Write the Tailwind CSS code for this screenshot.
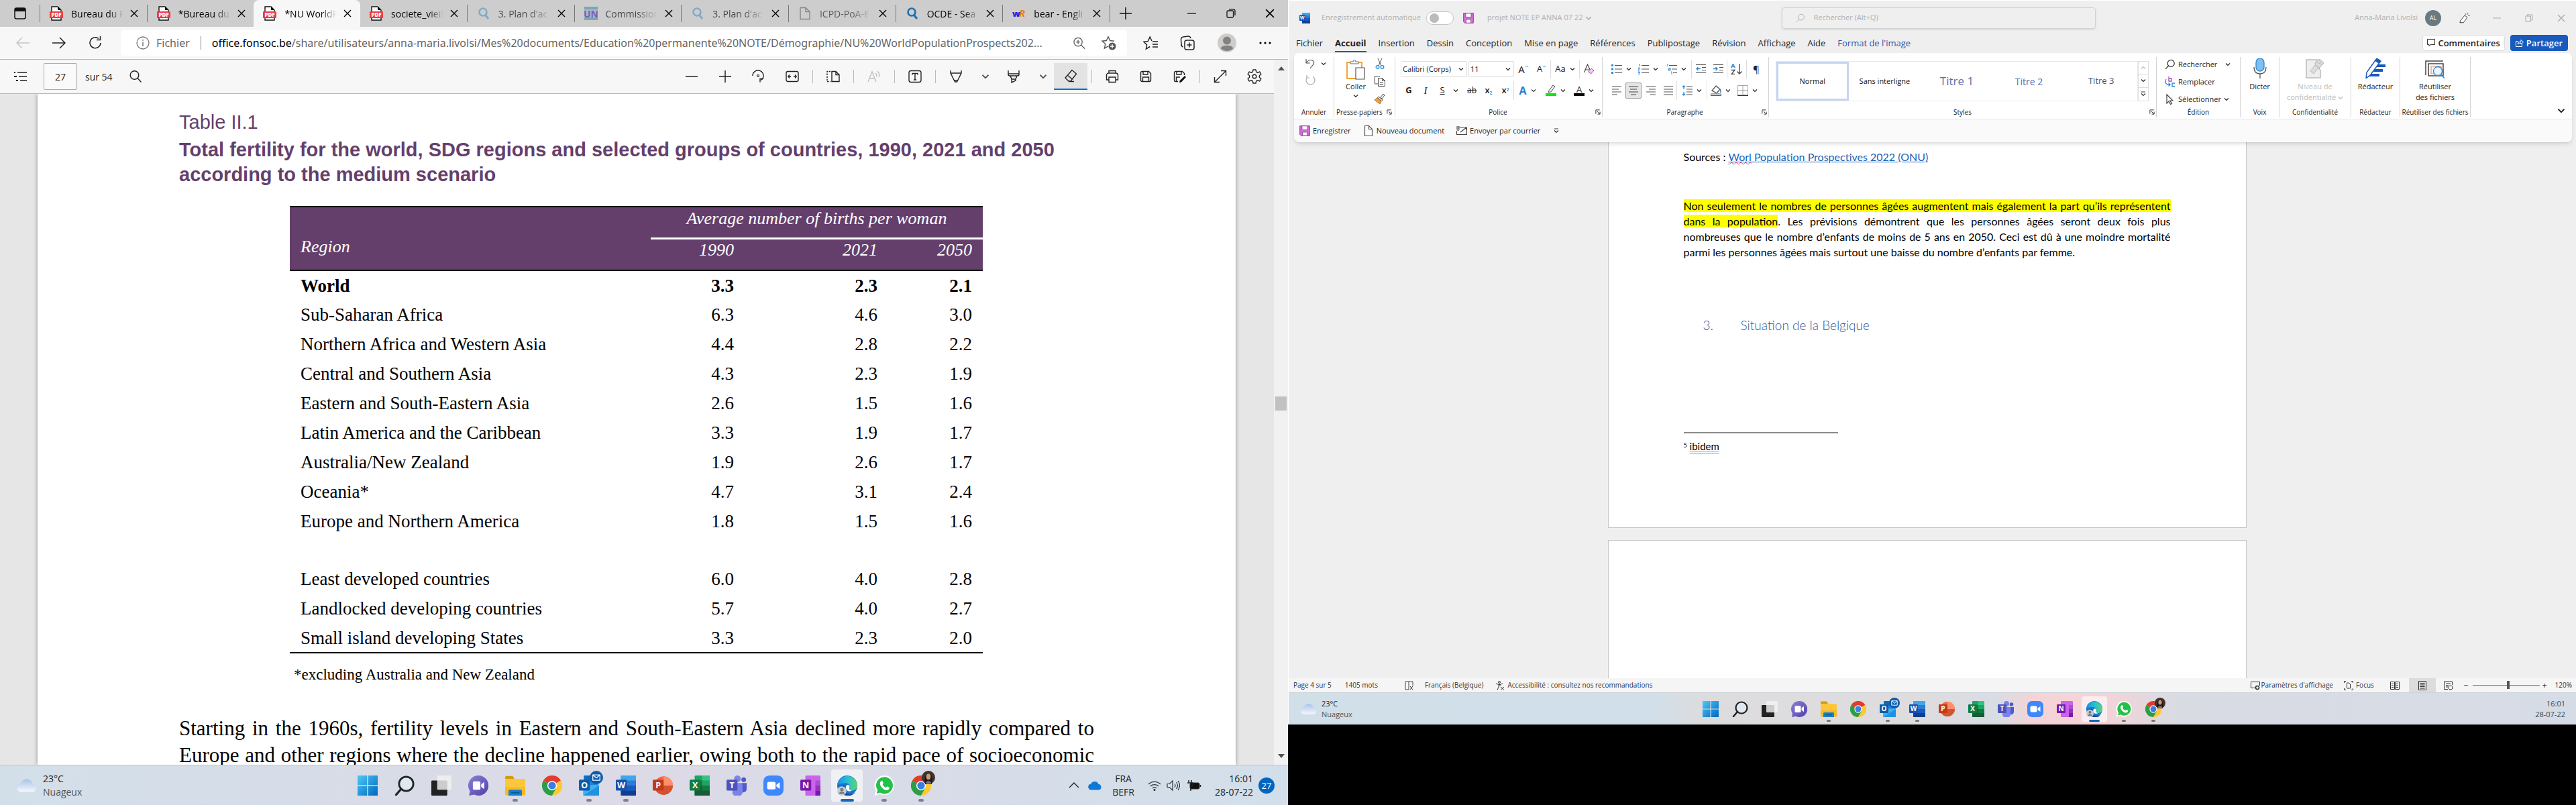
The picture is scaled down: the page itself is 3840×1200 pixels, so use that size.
<!DOCTYPE html>
<html lang="fr">
<head>
    <meta charset="utf-8">
    <title>NU WorldPopulationProspects2022</title>
    <script src="https://cdn.jsdelivr.net/npm/@tailwindcss/browser@4"></script>
</head>
<body class="flex h-screen overflow-hidden bg-black font-['Open_Sans',sans-serif] text-[#222]">

<!-- shared icons -->
<svg class="absolute size-0">
    <defs>
        <linearGradient id="g-win" x1="0" y1="0" x2="1" y2="1"><stop offset="0" stop-color="#4cc8f8"/><stop offset="1" stop-color="#0067c0"/></linearGradient>
        <linearGradient id="g-chat" x1="0" y1="0" x2="1" y2="1"><stop offset="0" stop-color="#8b80d6"/><stop offset="1" stop-color="#5340a8"/></linearGradient>
        <linearGradient id="g-edge" x1="0" y1="0" x2="1" y2="0"><stop offset="0" stop-color="#1b8fe0"/><stop offset=".5" stop-color="#27bfd6"/><stop offset="1" stop-color="#5fd46a"/></linearGradient>
        <linearGradient id="g-cloud" x1="0" y1="0" x2="0" y2="1"><stop offset="0" stop-color="#a9c4e8"/><stop offset="1" stop-color="#f4f8fd"/></linearGradient>
    </defs>
    <symbol id="chev" viewBox="0 0 8 8"><path d="M1 2.5l3 3 3-3" fill="none" stroke="currentColor" stroke-width="1.2"/></symbol>
    <symbol id="close" viewBox="0 0 12 12"><path d="M1 1l10 10M11 1L1 11" fill="none" stroke="currentColor" stroke-width="1.4"/></symbol>
    <symbol id="pdf" viewBox="0 0 20 22">
        <path d="M3 1h9l5 5v15H3z" fill="#fff" stroke="#111" stroke-width="1.4"/><path d="M12 1v5h5z" fill="#111"/>
        <rect x="0" y="8" width="20" height="10" rx="1" fill="#f0393f"/>
        <text x="10" y="16" text-anchor="middle" font-family="Open Sans" font-size="8" font-weight="800" fill="#fff">PDF</text>
    </symbol>
    <symbol id="lens" viewBox="0 0 20 20"><circle cx="9" cy="8" r="5.5" fill="none" stroke="currentColor" stroke-width="2.6"/><path d="M12.5 12.5L17 18" stroke="currentColor" stroke-width="3"/></symbol>
    <symbol id="find" viewBox="0 0 20 20"><circle cx="8.500" cy="8" r="6.300" fill="none" stroke="currentColor" stroke-width="1.4"/><path d="M13 12.500L18.500 18.500" stroke="currentColor" stroke-width="1.4"/></symbol>
    <symbol id="launcher" viewBox="0 0 9 9"><path d="M1 7.500V1h6.500M3.500 3.500L8 8M8 4v4H4" fill="none" stroke="#333" stroke-width="1.100"/></symbol>
    <symbol id="floppy" viewBox="0 0 16 16"><path d="M.7.700h14.600v14.600H2.700L.7 13.300z" fill="#d46ed8" stroke="#8f3a97"/><path d="M4 .8h8v5.700H4z" fill="#fff" stroke="#8f3a97" stroke-width=".8"/><path d="M4.500 10h7v5.200h-7z" fill="#fff" stroke="#8f3a97" stroke-width=".8"/></symbol>
    <symbol id="disk" viewBox="0 0 20 20"><path d="M2.500 4.500a2 2 0 012-2h10l3 3v10a2 2 0 01-2 2h-11a2 2 0 01-2-2zM6 2.500V7h7V2.500M5.500 17.500V11h9v6.500" fill="none" stroke="currentColor" stroke-width="1.400"/></symbol>

    <symbol id="t-start" viewBox="0 0 24 24"><path d="M0 0h11.400v11.400H0zM12.600 0H24v11.400H12.600zM0 12.600h11.400V24H0zM12.600 12.600H24V24H12.600z" fill="url(#g-win)"/></symbol>
    <symbol id="t-find" viewBox="0 0 24 24"><circle cx="14" cy="10" r="8.500" fill="#dfe9f0" stroke="#222" stroke-width="2.200"/><path d="M8 16l-6 7" stroke="#222" stroke-width="2.600" stroke-linecap="round"/></symbol>
    <symbol id="t-desk" viewBox="0 0 24 24"><rect x="0" y="6" width="19" height="18" rx="1" fill="#222"/><rect x="7" y="0" width="17" height="17" rx="1" fill="#f2f2f2" fill-opacity=".82"/></symbol>
    <symbol id="t-chat" viewBox="0 0 24 24"><path d="M12 0a12 12 0 11-5 22.800L1 24l1-5.500A12 12 0 0112 0z" fill="url(#g-chat)"/><rect x="5.500" y="7" width="9" height="10" rx="1.500" fill="#fff"/><path d="M15.500 10.500l3.500-2.700v8.400l-3.500-2.700z" fill="#fff"/></symbol>
    <symbol id="t-folder" viewBox="0 0 24 24"><path d="M0 2a1.500 1.500 0 011.500-1.500H9L11 4H0z" fill="#d49a10"/><path d="M0 4h22.500a1.500 1.500 0 011.500 1.500V22a1.500 1.500 0 01-1.500 1.500h-21A1.500 1.500 0 010 22z" fill="#fcc73a"/><path d="M0 14h24v8a1.500 1.500 0 01-1.500 1.500h-21A1.500 1.500 0 010 22z" fill="#f7b927"/><path d="M4 24v-5.500A1.500 1.500 0 015.500 17h13a1.500 1.500 0 011.500 1.500V24z" fill="#1580cf"/><path d="M7 20.500h10" stroke="#0b5597" stroke-width="1.400"/></symbol>
    <symbol id="t-chrome" viewBox="0 0 24 24"><circle cx="12" cy="12" r="12" fill="#fcc934"/><path d="M12 12L1.600 6A12 12 0 0122.400 6z" fill="#e33b2e"/><path d="M12 12L1.600 6A12 12 0 0012 24l5.200-9z" fill="#2b9d4a"/><path d="M12 12l10.400-6A12 12 0 0112 24l5.200-9z" fill="#fcc934"/><circle cx="12" cy="12" r="5.700" fill="#fff"/><circle cx="12" cy="12" r="4.500" fill="#3b7de8"/></symbol>
    <symbol id="t-outlook" viewBox="0 0 24 24"><path d="M6 0h17v14H6z" fill="#1e86d8"/><path d="M6 0h9v7H6z" fill="#0f6cbd"/><path d="M5 12l19-1v11.500a1.500 1.500 0 01-1.500 1.500h-16A1.500 1.500 0 015 22.500z" fill="#3fb0f0"/><path d="M5 24l19-12v11a1 1 0 01-1 1z" fill="#1f92e0"/><rect x="0" y="5" width="13" height="13" rx="1.200" fill="#0f5ba8"/><text x="6.500" y="15.200" text-anchor="middle" font-family="Open Sans" font-size="10" font-weight="700" fill="#fff">O</text></symbol>
    <symbol id="t-word" viewBox="0 0 24 24"><rect x="6" y="0" width="18" height="24" rx="1.200" fill="#2b7cd3"/><path d="M6 0h18v6H6z" fill="#41a5ee"/><path d="M6 12h18v6H6z" fill="#185abd"/><path d="M6 18h18v5a1 1 0 01-1 1H7a1 1 0 01-1-1z" fill="#103f91"/><rect x="0" y="5" width="13" height="13" rx="1.200" fill="#1451b0"/><text x="6.500" y="15" text-anchor="middle" font-family="Open Sans" font-size="10" font-weight="700" fill="#fff">W</text></symbol>
    <symbol id="t-ppt" viewBox="0 0 24 24"><circle cx="13" cy="12" r="11" fill="#ed6c47"/><path d="M13 1a11 11 0 0111 11H13z" fill="#ff8f6b"/><path d="M2 12h22a11 11 0 01-22 0z" fill="#d35230"/><rect x="0" y="5" width="13" height="13" rx="1.200" fill="#c03a1c"/><text x="6.500" y="15" text-anchor="middle" font-family="Open Sans" font-size="10" font-weight="700" fill="#fff">P</text></symbol>
    <symbol id="t-excel" viewBox="0 0 24 24"><rect x="6" y="0" width="18" height="24" rx="1.200" fill="#21a366"/><path d="M15 0h9v6h-9z" fill="#33c481"/><path d="M6 6h9v6H6z" fill="#107c41"/><path d="M6 12h18v12H6z" fill="#185c37"/><path d="M15 12h9v6h-9z" fill="#107c41"/><rect x="0" y="5" width="13" height="13" rx="1.200" fill="#107c41"/><text x="6.500" y="15" text-anchor="middle" font-family="Open Sans" font-size="10" font-weight="700" fill="#fff">X</text></symbol>
    <symbol id="t-teams" viewBox="0 0 24 24"><circle cx="13" cy="4" r="4" fill="#7b83eb"/><circle cx="20.500" cy="5" r="2.800" fill="#5059c9"/><path d="M17 9h7v7a4 4 0 01-5 4z" fill="#5059c9"/><path d="M7 9h12v8a6 6 0 01-12 4z" fill="#7b83eb"/><rect x="0" y="5" width="13" height="13" rx="1.200" fill="#4b53bc"/><text x="6.500" y="15" text-anchor="middle" font-family="Open Sans" font-size="10" font-weight="700" fill="#fff">T</text></symbol>
    <symbol id="t-zoom" viewBox="0 0 24 24"><rect width="24" height="24" rx="7" fill="#3f88fb"/><rect x="4.500" y="7.500" width="10" height="9" rx="2" fill="#fff"/><path d="M15.500 11l4-3v8l-4-3z" fill="#fff"/></symbol>
    <symbol id="t-onenote" viewBox="0 0 24 24"><rect x="6" y="0" width="18" height="24" rx="1.200" fill="#ca64ea"/><path d="M18 6h6v6h-6z" fill="#ae4bd5"/><path d="M18 12h6v6h-6z" fill="#9332bf"/><path d="M18 18h6v6h-6z" fill="#7719aa"/><rect x="0" y="5" width="13" height="13" rx="1.200" fill="#7719aa"/><text x="6.500" y="15" text-anchor="middle" font-family="Open Sans" font-size="10" font-weight="700" fill="#fff">N</text></symbol>
    <symbol id="t-edge" viewBox="0 0 24 24"><circle cx="12" cy="12" r="12" fill="#1577cf"/><path d="M.3 10A12 12 0 0124 12c0 4-3 6-6.500 6-3 0-4-1.300-3.200-2.300 1.700-2.300.7-6.700-4.300-6.700-4 0-7.700 1.600-9.700 1z" fill="url(#g-edge)"/><path d="M9 11c-3 4 0 11 7 11 2.500 0 4.500-.8 6-2a12 12 0 01-13 3.600C3 21 4 13 9 11z" fill="#0c4f9e"/><path d="M11 12c1.500-1.500 3.800-.5 3.800 1.200 0 1-.8 1.800-.5 2.800.4 1.300 1.800 2 3.200 2-2 1.500-5 1-6.500-1-1-1.500-1-3.500 0-5z" fill="#fff"/><circle cx="5.500" cy="18.500" r="5.500" fill="#c9cdd2"/><circle cx="5.500" cy="16.800" r="2" fill="#767a80"/><path d="M2 22a3.600 3.600 0 017 0z" fill="#767a80"/></symbol>
    <symbol id="t-wa" viewBox="0 0 24 24"><path d="M12.300 0a11.700 11.700 0 11-5.500 22L.5 24l1.800-6A11.700 11.700 0 0112.300 0z" fill="#fff"/><path d="M12.300 1.800a10 10 0 11-5.200 18.500L3 21.500l1.200-4A10 10 0 0112.300 1.800z" fill="#25c04a"/><path d="M8.500 6.500c.8-.5 1.500-.3 1.800.5l.7 1.800c.2.600-.8 1.400-.8 1.800 1 2 2.300 3 4 3.700.5 0 1.200-1.400 1.800-1.200l2 1c.7.400-.2 3.400-2.800 3.400C11 17.500 7 12.500 7 9.500c0-1.300.8-2.500 1.500-3z" fill="#fff"/></symbol>
    <symbol id="t-face" viewBox="0 0 16 16"><circle cx="8" cy="8" r="8" fill="#3d342c"/><path d="M4 16c-1-6 0-13 4-13s5 7 4 13z" fill="#1e1814"/><ellipse cx="8" cy="7" rx="2.600" ry="3.600" fill="#c99a7c"/><path d="M4.500 15a3.600 3.600 0 017 0 8 8 0 01-7 0z" fill="#7c6d8e"/></symbol>
    <symbol id="t-mail" viewBox="0 0 16 16"><circle cx="8" cy="8" r="8" fill="#0b5cad"/><path d="M3.800 4.800h8.400v6.400H3.800zM3.800 4.800L8 8.500l4.200-3.700" fill="none" stroke="#fff"/></symbol>
    <symbol id="t-cloud" viewBox="0 0 30 20"><path d="M8 19a6.500 6.500 0 01-1-13A8.500 8.500 0 0123 7.500 6 6 0 0124 19z" fill="url(#g-cloud)"/></symbol>
</svg>

<!-- left screen -->
<section class="flex h-full w-1/2 flex-col bg-[#f7f7f7]">
    <nav class="flex h-10 shrink-0 items-center bg-[#cdcdcd] text-[14px] text-black">
        <button class="flex h-full w-[59px] items-center pl-5" aria-label="Menu onglets">
            <svg class="size-5" viewBox="0 0 20 20"><rect x="2" y="2" width="16" height="16" rx="2.500" fill="none" stroke="#111" stroke-width="1.500"/><path d="M2 4a2 2 0 012-2h12a2 2 0 012 2v3H2z" fill="#111"/></svg>
        </button>
        <ul class="flex h-full min-w-0 flex-1 items-center">
            <li class="flex h-[26px] min-w-0 flex-1 items-center border-l border-[#777] pl-3.5">
                <svg class="h-[22px] w-5 shrink-0"><use href="#pdf"/></svg>
                <a href="#" class="ml-3 w-[78px] overflow-hidden whitespace-nowrap bg-linear-to-r from-black from-70% to-black/0 bg-clip-text text-transparent">Bureau du P</a>
                <button class="ml-2.5" aria-label="Fermer"><svg class="size-3"><use href="#close"/></svg></button>
            </li>
            <li class="flex h-[26px] min-w-0 flex-1 items-center border-l border-[#777] pl-3.5">
                <svg class="h-[22px] w-5 shrink-0"><use href="#pdf"/></svg>
                <a href="#" class="ml-3 w-[78px] overflow-hidden whitespace-nowrap bg-linear-to-r from-black from-70% to-black/0 bg-clip-text text-transparent">*Bureau du</a>
                <button class="ml-2.5" aria-label="Fermer"><svg class="size-3"><use href="#close"/></svg></button>
            </li>
            <li class="flex h-full min-w-0 flex-1 items-center rounded-t-lg bg-[#f7f7f7] pl-3.5">
                <svg class="h-[22px] w-5 shrink-0"><use href="#pdf"/></svg>
                <a href="#" class="ml-3 w-[78px] overflow-hidden whitespace-nowrap bg-linear-to-r from-black from-70% to-black/0 bg-clip-text text-transparent">*NU WorldP</a>
                <button class="ml-2.5" aria-label="Fermer"><svg class="size-3"><use href="#close"/></svg></button>
            </li>
            <li class="flex h-[26px] min-w-0 flex-1 items-center pl-3.5">
                <svg class="h-[22px] w-5 shrink-0"><use href="#pdf"/></svg>
                <a href="#" class="ml-3 w-[78px] overflow-hidden whitespace-nowrap bg-linear-to-r from-black from-70% to-black/0 bg-clip-text text-transparent">societe_vieil</a>
                <button class="ml-2.5" aria-label="Fermer"><svg class="size-3"><use href="#close"/></svg></button>
            </li>
            <li class="flex h-[26px] min-w-0 flex-1 items-center border-l border-[#777] pl-3.5">
                <svg class="size-5 shrink-0 text-[#7fabc9]"><use href="#lens"/></svg>
                <a href="#" class="ml-3 w-[78px] overflow-hidden whitespace-nowrap bg-linear-to-r from-[#444] from-60% to-black/0 bg-clip-text text-transparent">3. Plan d'ac</a>
                <button class="ml-2.5" aria-label="Fermer"><svg class="size-3"><use href="#close"/></svg></button>
            </li>
            <li class="flex h-[26px] min-w-0 flex-1 items-center border-l border-[#777] pl-3.5">
                <svg class="size-5 shrink-0" viewBox="0 0 20 20"><rect width="20" height="20" fill="#aab4cc"/><path d="M0 0h20v4H0zM0 16h20v4H0z" fill="#77aab0"/><text x="10" y="15.500" text-anchor="middle" font-family="Open Sans" font-size="14" font-weight="700" fill="#7560b5">UN</text></svg>
                <a href="#" class="ml-3 w-[78px] overflow-hidden whitespace-nowrap bg-linear-to-r from-[#444] from-60% to-black/0 bg-clip-text text-transparent">Commission</a>
                <button class="ml-2.5" aria-label="Fermer"><svg class="size-3"><use href="#close"/></svg></button>
            </li>
            <li class="flex h-[26px] min-w-0 flex-1 items-center border-l border-[#777] pl-3.5">
                <svg class="size-5 shrink-0 text-[#7fabc9]"><use href="#lens"/></svg>
                <a href="#" class="ml-3 w-[78px] overflow-hidden whitespace-nowrap bg-linear-to-r from-[#444] from-60% to-black/0 bg-clip-text text-transparent">3. Plan d'ac</a>
                <button class="ml-2.5" aria-label="Fermer"><svg class="size-3"><use href="#close"/></svg></button>
            </li>
            <li class="flex h-[26px] min-w-0 flex-1 items-center border-l border-[#777] pl-3.5">
                <svg class="size-5 shrink-0" viewBox="0 0 20 20"><path d="M3 1.500h8l6 6v11H3zM11 1.500v6h6" fill="none" stroke="#888" stroke-width="1.500"/></svg>
                <a href="#" class="ml-3 w-[78px] overflow-hidden whitespace-nowrap bg-linear-to-r from-[#555] from-60% to-black/0 bg-clip-text text-transparent">ICPD-PoA-E</a>
                <button class="ml-2.5" aria-label="Fermer"><svg class="size-3"><use href="#close"/></svg></button>
            </li>
            <li class="flex h-[26px] min-w-0 flex-1 items-center border-l border-[#777] pl-3.5">
                <svg class="size-5 shrink-0 text-[#1570b8]"><use href="#lens"/></svg>
                <a href="#" class="ml-3 w-[78px] overflow-hidden whitespace-nowrap bg-linear-to-r from-black from-70% to-black/0 bg-clip-text text-transparent">OCDE - Sea</a>
                <button class="ml-2.5" aria-label="Fermer"><svg class="size-3"><use href="#close"/></svg></button>
            </li>
            <li class="flex h-[26px] min-w-0 flex-1 items-center border-x border-[#777] pl-3.5">
                <svg class="size-5 shrink-0" viewBox="0 0 20 20"><text x="0" y="15" font-family="Open Sans" font-size="13" font-weight="800" fill="#2222dd">w</text><text x="10" y="15" font-family="Open Sans" font-size="15" font-style="italic" font-weight="700" fill="#e87d1c">R</text></svg>
                <a href="#" class="ml-3 w-[78px] overflow-hidden whitespace-nowrap bg-linear-to-r from-black from-70% to-black/0 bg-clip-text text-transparent">bear - Engli</a>
                <button class="ml-2.5" aria-label="Fermer"><svg class="size-3"><use href="#close"/></svg></button>
            </li>
        </ul>
        <div class="flex w-[265px] items-center justify-between pl-3.5 pr-5">
            <button aria-label="Nouvel onglet"><svg class="size-[18px]" viewBox="0 0 18 18"><path d="M9 0v18M0 9h18" stroke="#111" stroke-width="1.500"/></svg></button>
            <div class="flex gap-11">
                <button aria-label="Réduire"><svg class="size-3.5" viewBox="0 0 14 14"><path d="M0 7h13" stroke="#111" stroke-width="1.300"/></svg></button>
                <button aria-label="Restaurer"><svg class="size-3.5" viewBox="0 0 14 14"><rect x="1" y="3" width="9.500" height="10" rx="1.500" fill="none" stroke="#111" stroke-width="1.300"/><path d="M4 .8h6.500a2.500 2.500 0 012.500 2.500V10" fill="none" stroke="#111" stroke-width="1.300"/></svg></button>
                <button aria-label="Fermer la fenêtre"><svg class="size-3.5"><use href="#close"/></svg></button>
            </div>
        </div>
    </nav>

    <div class="flex h-[49px] shrink-0 items-center border-b border-[#b9b9b9] pl-6 pr-6">
        <div class="flex w-[156px] gap-[34px]">
            <button aria-label="Précédent"><svg class="size-5" viewBox="0 0 20 20"><path d="M20 10H1M9 2L1 10l8 8" fill="none" stroke="#c4c4c4" stroke-width="1.500"/></svg></button>
            <button aria-label="Suivant"><svg class="size-5" viewBox="0 0 20 20"><path d="M0 10h19M11 2l8 8-8 8" fill="none" stroke="#222" stroke-width="1.500"/></svg></button>
            <button aria-label="Actualiser"><svg class="size-5" viewBox="0 0 20 20"><path d="M18 10a8 8 0 11-3-6.500M17.500 0v5.500H12" fill="none" stroke="#222" stroke-width="1.500"/></svg></button>
        </div>
        <div class="flex h-[38px] min-w-0 flex-1 items-center rounded bg-white pl-[23px] pr-4 font-['Noto_Sans',sans-serif] text-[16px] text-[#666]">
            <svg class="size-5 shrink-0" viewBox="0 0 20 20"><circle cx="10" cy="10" r="9" fill="none" stroke="#777" stroke-width="1.300"/><path d="M10 8.500V15M10 5v1.800" stroke="#777" stroke-width="1.500"/></svg>
            <span class="ml-2.5">Fichier</span>
            <span class="mx-4 h-5 w-px bg-[#888]"></span>
            <a href="#" class="min-w-0 flex-1 truncate"><span class="text-black">office.fonsoc.be</span>/share/utilisateurs/anna-maria.livolsi/Mes%20documents/Education%20permanente%20NOTE/Démographie/NU%20WorldPopulationProspects202...</a>
            <button aria-label="Zoom"><svg class="size-[19px]" viewBox="0 0 20 20"><circle cx="8.500" cy="8" r="6.500" fill="none" stroke="#555" stroke-width="1.300"/><path d="M8.500 5v6M5.500 8h6M13 12.500l6 6" stroke="#555" stroke-width="1.400"/></svg></button>
            <button class="ml-6" aria-label="Ajouter aux favoris"><svg class="size-[22px]" viewBox="0 0 22 22"><path d="M10 1.500l2.600 6 6.400.7M10 1.500L7.400 7.500 1 8.200l4.800 4.300L4.400 19l5.600-3.200" fill="none" stroke="#555" stroke-width="1.400"/><circle cx="16" cy="16" r="5.500" fill="#555"/><path d="M16 13v6M13 16h6" stroke="#fff" stroke-width="1.400"/></svg></button>
        </div>
        <div class="flex w-[216px] items-center justify-between pl-6">
            <button aria-label="Favoris"><svg class="size-[22px]" viewBox="0 0 22 22"><path d="M13 8l-2.800-6-3 6.500-6.400.8 4.800 4.500L4.400 20l5.800-3.500M14 9h8M14 13h8M14 17h8" fill="none" stroke="#222" stroke-width="1.500"/></svg></button>
            <button aria-label="Collections"><svg class="size-[22px]" viewBox="0 0 22 22"><rect x="7" y="7" width="14" height="14" rx="3" fill="none" stroke="#222" stroke-width="1.500"/><path d="M14 10.500v7M10.500 14h7M4.500 17A4 4 0 012 13L1.500 6A4 4 0 015 2l7-1a4 4 0 014 3" fill="none" stroke="#222" stroke-width="1.500"/></svg></button>
            <button aria-label="Profil"><svg class="size-7" viewBox="0 0 28 28"><circle cx="14" cy="14" r="14" fill="#cfcdca"/><circle cx="14" cy="10.500" r="6" fill="#85817e"/><path d="M4.500 22a10 6 0 0119 0 13.500 13.500 0 01-19 0z" fill="#85817e"/></svg></button>
            <button aria-label="Paramètres et plus"><svg class="h-4 w-5" viewBox="0 0 20 16"><circle cx="3" cy="8" r="1.600"/><circle cx="10" cy="8" r="1.600"/><circle cx="17" cy="8" r="1.600"/></svg></button>
        </div>
    </div>

    <div class="flex min-h-0 flex-1">
        <div class="flex min-w-0 flex-1 flex-col">
            <div class="flex h-[51px] shrink-0 items-center border-b border-[#b9b9b9] pl-5 pr-[18px] text-[14px]">
                <button aria-label="Sommaire"><svg class="size-5" viewBox="0 0 20 20"><path d="M6 4h14M8 10h12M10 16h10" stroke="#222" stroke-width="1.500"/><path d="M1 4h2M1 10h4M4 16h3" stroke="#222" stroke-width="2"/></svg></button>
                <input class="ml-[25px] h-10 w-[50px] rounded-xs border border-[#aaa] bg-[#fafafa] text-center" value="27" aria-label="Page">
                <span class="ml-3 mr-6">sur 54</span>
                <button aria-label="Rechercher"><svg class="size-5"><use href="#find"/></svg></button>
                <div class="ml-auto flex items-center gap-[30px] text-[#222]">
                    <button aria-label="Zoom arrière"><svg class="size-5" viewBox="0 0 20 20"><path d="M1 10h18" stroke="#222" stroke-width="1.500"/></svg></button>
                    <button aria-label="Zoom avant"><svg class="size-5" viewBox="0 0 20 20"><path d="M1 10h18M10 1v18" stroke="#222" stroke-width="1.500"/></svg></button>
                    <button aria-label="Pivoter"><svg class="size-5" viewBox="0 0 20 20"><path d="M1 9a8 8 0 1112.500 6.500M12 18.500v-5h5" fill="none" stroke="#222" stroke-width="1.400"/><circle cx="9" cy="9" r="1.500" fill="none" stroke="#222" stroke-width="1.200"/></svg></button>
                    <button aria-label="Ajuster"><svg class="size-5" viewBox="0 0 20 20"><rect x="1" y="2.500" width="18" height="15" rx="2.500" fill="none" stroke="#222" stroke-width="1.400"/><path d="M8 10H4M6 7.500L3.800 10 6 12.500M12 10h4M14 7.500l2.200 2.500-2.200 2.500" fill="none" stroke="#222" stroke-width="1.300"/></svg></button>
                </div>
                <div class="ml-5 flex items-center gap-5">
                    <span class="h-5 w-px bg-[#bbb]"></span>
                    <button aria-label="Affichage"><svg class="size-5" viewBox="0 0 20 20"><path d="M8 2.500h6l5 5v10H8zM14 2.500v5h5" fill="none" stroke="#222" stroke-width="1.400"/><path d="M6 2.500H1v15h5" fill="none" stroke="#222" stroke-width="1.400" stroke-dasharray="2.500 1.500"/></svg></button>
                    <span class="h-5 w-px bg-[#bbb]"></span>
                    <button aria-label="Lire à voix haute"><svg class="size-5" viewBox="0 0 20 20"><path d="M1 18L7 3l6 15M3 13h8M12 5q2.500 2 1.500 5M15 2q4 4 2 9" fill="none" stroke="#c0c0c0" stroke-width="1.400"/></svg></button>
                    <span class="h-5 w-px bg-[#bbb]"></span>
                    <button aria-label="Ajouter du texte"><svg class="size-5" viewBox="0 0 20 20"><rect x="1" y="1.500" width="18" height="17" rx="3" fill="none" stroke="#222" stroke-width="1.400"/><path d="M6 7.500V5.500h8v2M10 5.500V15M8 15h4" fill="none" stroke="#222" stroke-width="1.400"/></svg></button>
                    <span class="h-5 w-px bg-[#bbb]"></span>
                </div>
                <div class="ml-5 flex items-center">
                    <button aria-label="Dessiner"><svg class="size-5" viewBox="0 0 20 20"><path d="M2 1v4l6.500 13h3L18 5V1M2 5h16M8 16h4" fill="none" stroke="#222" stroke-width="1.400"/></svg></button>
                    <button class="ml-7" aria-label="Options du stylet"><svg class="size-3 text-[#555]"><use href="#chev"/></svg></button>
                    <button class="ml-[26px]" aria-label="Surligner"><svg class="size-5" viewBox="0 0 20 20"><path d="M2 1v6a2 2 0 002 2h12a2 2 0 002-2V1M2 6h16M5 9l2 5h6l2-5M7 14v5l6-3v-2" fill="none" stroke="#222" stroke-width="1.400"/></svg></button>
                    <button class="ml-7" aria-label="Options du surligneur"><svg class="size-3 text-[#555]"><use href="#chev"/></svg></button>
                    <button class="ml-2.5 flex h-10 w-[50px] items-center justify-center border-b-2 border-[#0f6cbd] bg-[#e3e3e3]" aria-label="Effacer"><svg class="size-5" viewBox="0 0 20 20"><path d="M12 1.500l6.500 5.500-8.500 11H7L2 13zM5 9l7.500 6M7 18.500h8" fill="none" stroke="#222" stroke-width="1.400"/></svg></button>
                    <span class="ml-1.5 h-5 w-px bg-[#bbb]"></span>
                </div>
                <div class="ml-5 flex items-center gap-[30px]">
                    <button aria-label="Imprimer"><svg class="size-5" viewBox="0 0 20 20"><path d="M5 5V1.500h10V5M4.500 15H1.500V8a3 3 0 013-3h11a3 3 0 013 3v7h-3M5 11h10v7.500H5z" fill="none" stroke="#222" stroke-width="1.400"/></svg></button>
                    <button aria-label="Enregistrer"><svg class="size-5"><use href="#disk"/></svg></button>
                    <button aria-label="Enregistrer sous"><svg class="size-5" viewBox="0 0 20 20"><path d="M8 17.500H4.500a2 2 0 01-2-2v-11a2 2 0 012-2h10l3 3V8M6 2.500V7h7V2.500M5.500 17.500V11H11" fill="none" stroke="#222" stroke-width="1.400"/><path d="M18 9l2 2-7 7.500-3 .8.700-3z" fill="#111"/></svg></button>
                </div>
                <div class="ml-5 flex items-center">
                    <span class="h-5 w-px bg-[#bbb]"></span>
                    <button class="ml-5" aria-label="Plein écran"><svg class="size-5" viewBox="0 0 20 20"><path d="M1.500 18.500l17-17M11 1.500h7.500V9M1.500 11v7.500H9" fill="none" stroke="#222" stroke-width="1.400"/></svg></button>
                    <button class="ml-[30px]" aria-label="Paramètres"><svg class="size-[22px]" viewBox="0 0 22 22"><path d="M9 1h4l.7 3.200 2 1.100L18.900 4l2 3.500-2.500 2.300v2.400l2.500 2.300-2 3.500-3.200-1.300-2 1.100L13 21H9l-.7-3.200-2-1.100L3.100 18l-2-3.500 2.500-2.300V9.800L1.100 7.500l2-3.500 3.200 1.300 2-1.100z" fill="none" stroke="#222" stroke-width="1.400" stroke-linejoin="round"/><circle cx="11" cy="11" r="2.800" fill="none" stroke="#222" stroke-width="1.400"/></svg></button>
                </div>
            </div>

            <main class="min-h-0 flex-1 overflow-hidden bg-[#e6e6e6] pl-14 pr-[57px]">
                <article class="h-full bg-white pl-[211px] pr-[211px] pt-6 text-black shadow-[0_0_6px_rgba(0,0,0,0.4)]">
                    <h2 class="font-['Liberation_Sans',sans-serif] text-[29px] leading-[37px] text-[#643f6c]">
                        <span class="mb-1 block">Table II.1</span>
                        <strong class="block">Total fertility for the world, SDG regions and selected groups of countries, 1990, 2021 and 2050<br>according to the medium scenario</strong>
                    </h2>
                    <table class="ml-[165px] mt-7 w-[1033px] border-b-2 border-black font-['Liberation_Serif',serif] text-[27px] leading-7">
                        <thead class="border-y-2 border-black bg-[#643f6c] text-left text-[26px] italic text-white">
                            <tr class="h-[47px]">
                                <th rowspan="2" class="w-[538px] pb-5 pl-4 align-bottom font-normal">Region</th>
                                <th colspan="3" class="border-b-3 border-white pb-2.5 text-center font-normal">Average number of births per woman</th>
                            </tr>
                            <tr class="h-12 text-right">
                                <th class="w-[124px] pb-3 font-normal">1990</th>
                                <th class="w-[214px] pb-3 font-normal">2021</th>
                                <th class="pb-3 pr-4 font-normal">2050</th>
                            </tr>
                        </thead>
                        <tbody class="text-right">
                            <tr class="h-11 font-bold"><th class="pl-4 text-left">World</th><td>3.3</td><td>2.3</td><td class="pr-4">2.1</td></tr>
                            <tr class="h-11"><td class="pl-4 text-left">Sub-Saharan Africa</td><td>6.3</td><td>4.6</td><td class="pr-4">3.0</td></tr>
                            <tr class="h-11"><td class="pl-4 text-left">Northern Africa and Western Asia</td><td>4.4</td><td>2.8</td><td class="pr-4">2.2</td></tr>
                            <tr class="h-11"><td class="pl-4 text-left">Central and Southern Asia</td><td>4.3</td><td>2.3</td><td class="pr-4">1.9</td></tr>
                            <tr class="h-11"><td class="pl-4 text-left">Eastern and South-Eastern Asia</td><td>2.6</td><td>1.5</td><td class="pr-4">1.6</td></tr>
                            <tr class="h-11"><td class="pl-4 text-left">Latin America and the Caribbean</td><td>3.3</td><td>1.9</td><td class="pr-4">1.7</td></tr>
                            <tr class="h-11"><td class="pl-4 text-left">Australia/New Zealand</td><td>1.9</td><td>2.6</td><td class="pr-4">1.7</td></tr>
                            <tr class="h-11"><td class="pl-4 text-left">Oceania*</td><td>4.7</td><td>3.1</td><td class="pr-4">2.4</td></tr>
                            <tr class="h-11"><td class="pl-4 text-left">Europe and Northern America</td><td>1.8</td><td>1.5</td><td class="pr-4">1.6</td></tr>
                            <tr class="h-[42px]"><td colspan="4"></td></tr>
                            <tr class="h-11"><td class="pl-4 text-left">Least developed countries</td><td>6.0</td><td>4.0</td><td class="pr-4">2.8</td></tr>
                            <tr class="h-11"><td class="pl-4 text-left">Landlocked developing countries</td><td>5.7</td><td>4.0</td><td class="pr-4">2.7</td></tr>
                            <tr class="h-11"><td class="pl-4 text-left">Small island developing States</td><td>3.3</td><td>2.3</td><td class="pr-4">2.0</td></tr>
                        </tbody>
                    </table>
                    <p class="ml-[171px] mt-[18px] font-['Liberation_Serif',serif] text-[23px] leading-7">*excluding Australia and New Zealand</p>
                    <p class="mt-[46px] text-justify font-['Liberation_Serif',serif] text-[31px] leading-10 [text-align-last:justify]">Starting in the 1960s, fertility levels in Eastern and South-Eastern Asia declined more rapidly compared to Europe and other regions where the decline happened earlier, owing both to the rapid pace of socioeconomic</p>
                </article>
            </main>
        </div>
        <div class="flex w-[21px] shrink-0 flex-col items-center justify-between bg-[#f1f1f1] py-2">
            <svg class="size-2.5" viewBox="0 0 10 10"><path d="M5 2l5 6H0z" fill="#505050"/></svg>
            <span class="mb-[26px] h-[21px] w-[17px] bg-[#c1c1c1]"></span>
            <svg class="size-2.5" viewBox="0 0 10 10"><path d="M5 8L0 2h10z" fill="#505050"/></svg>
        </div>
    </div>

    <footer class="grid h-[60px] shrink-0 grid-cols-[520px_1fr_auto] items-center border-t border-[#bcc5cc] bg-linear-to-r from-[#d2dfe9] via-[#dcdae6] to-[#d2dfea] text-[14px] leading-5">
        <div class="flex items-center gap-2 pl-6">
            <svg class="h-6 w-8"><use href="#t-cloud"/></svg>
            <div>23°C<br><span class="text-[#555]">Nuageux</span></div>
        </div>
        <ul class="flex items-center">
            <li class="flex h-12 w-[55px] items-center justify-center"><svg class="size-[30px]"><use href="#t-start"/></svg></li>
            <li class="flex h-12 w-[55px] items-center justify-center"><svg class="size-[30px]"><use href="#t-find"/></svg></li>
            <li class="flex h-12 w-[55px] items-center justify-center"><svg class="size-[30px]"><use href="#t-desk"/></svg></li>
            <li class="flex h-12 w-[55px] items-center justify-center"><svg class="size-[30px]"><use href="#t-chat"/></svg></li>
            <li class="relative flex h-12 w-[55px] items-center justify-center"><svg class="size-[30px]"><use href="#t-folder"/></svg><i class="absolute bottom-0 h-1 w-2 rounded-full bg-[#7a8290]"></i></li>
            <li class="flex h-12 w-[55px] items-center justify-center"><svg class="size-[30px]"><use href="#t-chrome"/></svg></li>
            <li class="relative flex h-12 w-[55px] items-center justify-center"><svg class="size-[30px]"><use href="#t-outlook"/></svg><svg class="absolute right-1.5 top-0.5 size-5"><use href="#t-mail"/></svg><i class="absolute bottom-0 h-1 w-2 rounded-full bg-[#7a8290]"></i></li>
            <li class="relative flex h-12 w-[55px] items-center justify-center"><svg class="size-[30px]"><use href="#t-word"/></svg><i class="absolute bottom-0 h-1 w-2 rounded-full bg-[#7a8290]"></i></li>
            <li class="flex h-12 w-[55px] items-center justify-center"><svg class="size-[30px]"><use href="#t-ppt"/></svg></li>
            <li class="flex h-12 w-[55px] items-center justify-center"><svg class="size-[30px]"><use href="#t-excel"/></svg></li>
            <li class="flex h-12 w-[55px] items-center justify-center"><svg class="size-[30px]"><use href="#t-teams"/></svg></li>
            <li class="flex h-12 w-[55px] items-center justify-center"><svg class="size-[30px]"><use href="#t-zoom"/></svg></li>
            <li class="flex h-12 w-[55px] items-center justify-center"><svg class="size-[30px]"><use href="#t-onenote"/></svg></li>
            <li class="relative mx-1 flex h-12 w-[47px] items-center justify-center rounded bg-white/60"><svg class="size-[30px]"><use href="#t-edge"/></svg><i class="absolute bottom-0 h-1 w-5 rounded-full bg-[#0f6cbd]"></i></li>
            <li class="relative flex h-12 w-[55px] items-center justify-center"><svg class="size-[30px]"><use href="#t-wa"/></svg><i class="absolute bottom-0 h-1 w-2 rounded-full bg-[#7a8290]"></i></li>
            <li class="relative flex h-12 w-[55px] items-center justify-center"><svg class="size-[30px]"><use href="#t-chrome"/></svg><svg class="absolute right-1.5 top-0.5 size-5"><use href="#t-face"/></svg><i class="absolute bottom-0 h-1 w-2 rounded-full bg-[#7a8290]"></i></li>
        </ul>
        <div class="flex items-center pr-5">
            <svg class="size-3.5" viewBox="0 0 14 14"><path d="M0 10l7-7 7 7" fill="none" stroke="#222" stroke-width="1.400"/></svg>
            <svg class="ml-3.5 h-4 w-5" viewBox="0 0 20 16"><path d="M5 14.500a4.500 4.500 0 01-.6-9A6 6 0 0115.500 6a4.300 4.300 0 01.5 8.500z" fill="#0f78d4"/></svg>
            <div class="ml-4 text-center">FRA<br>BEFR</div>
            <svg class="ml-5 size-5" viewBox="0 0 20 20"><path d="M1 8a13 13 0 0118 0M4 11a9 9 0 0112 0M7 14a5 5 0 016 0" fill="none" stroke="#333" stroke-width="1.300"/><circle cx="10" cy="16.500" r="1.500" fill="#222"/></svg>
            <svg class="ml-2 size-5" viewBox="0 0 20 20"><path d="M1 7.500h3.500L9 3v14l-4.500-4.500H1zM12 7.500q2 2.500 0 5M14.500 5q4 5 0 10M17 3q5 7 0 14" fill="none" stroke="#333" stroke-width="1.200"/></svg>
            <svg class="ml-2.5 h-5 w-[22px]" viewBox="0 0 22 20"><rect x="5" y="6" width="14" height="9" rx="2" fill="#111" stroke="#333"/><path d="M20.500 9v3M3 2v4M7 2v4M1 6h8v4H6v8" stroke="#222" stroke-width="1.500" fill="none"/></svg>
            <div class="ml-5 text-right">16:01<br>28-07-22</div>
            <span class="ml-2 flex size-6 items-center justify-center rounded-full bg-[#0067c0] text-[13px] text-white">27</span>
        </div>
    </footer>
</section>

<!-- right screen -->
<section class="flex h-[90vh] w-1/2 flex-col border-l border-t border-white bg-[#efefef]">
    <header class="flex h-[51px] shrink-0 items-center pl-4 text-[11px] text-[#b0b0b0]">
        <svg class="size-4"><use href="#t-word"/></svg>
        <label class="ml-[17px] flex items-center gap-2">Enregistrement automatique
            <input type="checkbox" class="sr-only">
            <span class="flex h-5 w-[41px] items-center rounded-full border border-[#c4c4c4] bg-white pl-1"><i class="size-3.5 rounded-full bg-[#bbb]"></i></span>
        </label>
        <button class="ml-3.5" aria-label="Enregistrer"><svg class="size-4"><use href="#floppy"/></svg></button>
        <button class="ml-5 flex items-center gap-1">projet NOTE EP ANNA 07 22 <svg class="size-2.5"><use href="#chev"/></svg></button>
        <div class="ml-[283px] flex h-8 w-[468px] items-center rounded border border-[#d2d2d2] pl-5 shadow-sm">
            <svg class="size-3.5 -scale-x-100"><use href="#find"/></svg>
            <input type="search" class="ml-3 flex-1 placeholder:text-[#b0b0b0]" placeholder="Rechercher (Alt+Q)" aria-label="Rechercher">
        </div>
        <span class="ml-auto">Anna-Maria Livolsi</span>
        <span class="ml-[11px] flex size-6 items-center justify-center rounded-full bg-[#69797e] text-[9px] text-white">AL</span>
        <svg class="ml-[27px] size-4" viewBox="0 0 16 16"><path d="M8 4l4 3-6 8-4-.500-1 .500.500-3z" fill="#fff" stroke="#444"/><path d="M9 1l1 2M13 0l-1 3M16 4l-3 .500" stroke="#2b88d8"/></svg>
        <svg class="ml-[34px] size-3" viewBox="0 0 12 12"><path d="M0 6h12" stroke="#aaa"/></svg>
        <svg class="ml-9 size-3" viewBox="0 0 12 12"><path d="M1 3h7.500v8H1zM3 3V1h8v8H8.500" fill="none" stroke="#aaa"/></svg>
        <svg class="ml-9 mr-4 size-3 text-[#aaa]"><use href="#close"/></svg>
    </header>

    <nav class="flex h-[27px] shrink-0 items-start pl-[11px] pr-3 text-[13px] leading-6">
        <ul class="flex gap-[18px]">
            <li><a href="#">Fichier</a></li>
            <li><a href="#" class="block border-b-2 border-[#2b579a] font-bold">Accueil</a></li>
            <li><a href="#">Insertion</a></li>
            <li><a href="#">Dessin</a></li>
            <li><a href="#">Conception</a></li>
            <li><a href="#">Mise en page</a></li>
            <li><a href="#">Références</a></li>
            <li><a href="#">Publipostage</a></li>
            <li><a href="#">Révision</a></li>
            <li><a href="#">Affichage</a></li>
            <li><a href="#">Aide</a></li>
            <li><a href="#" class="text-[#2b57a8]">Format de l'image</a></li>
        </ul>
        <button class="ml-auto flex h-6 items-center gap-1 rounded border border-[#ddd] bg-white px-1.5 font-semibold"><svg class="size-3" viewBox="0 0 12 12"><path d="M.5.500h11v8H5l-2 2.500v-2.500H.5z" fill="none" stroke="#333"/></svg>Commentaires</button>
        <button class="ml-2 flex h-6 items-center gap-1 rounded bg-[#185abd] px-2 font-semibold text-white"><svg class="size-3" viewBox="0 0 12 12"><path d="M4 3.500H.5v8h9V8M3 8q.5-4 5-4V1.500L11.500 5 8 8V6Q5 6 3 8z" fill="none" stroke="#fff"/></svg>Partager</button>
    </nav>

    <div class="z-10 ml-2 mr-1.5 shrink-0 rounded-lg bg-[#fafafa] shadow-md">
        <div class="flex h-[99px] rounded-t-lg border-b border-[#e4e4e4] bg-white text-[11px]">
            <div class="mb-0.5 mt-1.5 flex w-[60px] flex-col border-r border-[#d4d4d4]">
                <div class="flex items-center gap-2 pl-4 pt-0.5"><svg class="size-4" viewBox="0 0 16 16"><path d="M2 1v6h6M2 7q4-6 9-4t1 7l-4 5" fill="none" stroke="#555" stroke-width="1.200"/></svg><svg class="size-2"><use href="#chev"/></svg></div>
                <svg class="ml-4 mt-2 size-4" viewBox="0 0 16 16"><path d="M3 1v4h4M3 5a6.500 6.500 0 109-2" fill="none" stroke="#aaa" stroke-width="1.200"/></svg>
                <span class="mt-auto text-center text-[10px] leading-4">Annuler</span>
            </div>
            <div class="mb-0.5 mt-1.5 flex w-[91px] flex-col border-r border-[#d4d4d4]">
                <div class="flex flex-1 pl-4">
                    <button class="flex w-8 flex-col items-center"><svg class="mt-1 h-[30px] w-7" viewBox="0 0 28 30"><path d="M1 4h22v24H1z" fill="#fff" stroke="#f0a63c" stroke-width="2"/><path d="M6 6V3h4q1-3 2-3t2 3h4v3z" fill="#fff" stroke="#666"/><path d="M14 12h13v17H14z" fill="#fff" stroke="#555" stroke-width="1.200"/></svg><span class="leading-5">Coller</span><svg class="size-2"><use href="#chev"/></svg></button>
                    <div class="ml-3 flex flex-col gap-2.5 pt-0.5">
                        <svg class="size-4" viewBox="0 0 16 16"><path d="M5 0l5 11M11 0L6 11" stroke="#555"/><circle cx="4.500" cy="13" r="2.300" fill="none" stroke="#2b88d8" stroke-width="1.300"/><circle cx="11.500" cy="13" r="2.300" fill="none" stroke="#2b88d8" stroke-width="1.300"/></svg>
                        <svg class="size-4" viewBox="0 0 16 16"><path d="M5 12H.5V.5h6L8 2" fill="none" stroke="#444"/><path d="M5.500 3.500h6l4 4v8h-10zM11.500 3.500v4h4M8 10h5M8 12.500h5" fill="#fff" stroke="#444"/></svg>
                        <svg class="size-4" viewBox="0 0 16 16"><path d="M9 6l4-5 2 2-4 5z" fill="#fff" stroke="#444"/><path d="M6 5l6 5-1.500 1.500-6-5z" fill="#fff" stroke="#444"/><path d="M4 7l6 5-2 4-8-6z" fill="#f4a13a" stroke="#c56a10"/></svg>
                    </div>
                </div>
                <div class="flex items-center gap-1.5 pl-[3px] text-[10px] leading-4">Presse-papiers<svg class="size-2"><use href="#launcher"/></svg></div>
            </div>
            <div class="mb-0.5 mt-1.5 flex w-[309px] flex-col border-r border-[#d4d4d4] pl-2">
                <div class="mt-1 flex h-7 items-center">
                    <label class="flex h-6 w-[99px] items-center rounded-xs border border-[#ddd] pl-0.5 pr-1"><select class="min-w-0 flex-1 appearance-none" aria-label="Police"><option>Calibri (Corps)</option></select><svg class="size-2"><use href="#chev"/></svg></label>
                    <label class="ml-0.5 flex h-6 w-[68px] items-center rounded-xs border border-[#ddd] pl-0.5 pr-1"><select class="min-w-0 flex-1 appearance-none" aria-label="Taille"><option>11</option></select><svg class="size-2"><use href="#chev"/></svg></label>
                    <button class="flex w-7 items-center justify-center text-[15px]">A<svg class="mb-2 size-1.5 -scale-y-100 text-[#2b88d8]"><use href="#chev"/></svg></button>
                    <button class="flex w-[26px] items-center justify-center text-[13px]">A<svg class="mb-2 size-1.5 text-[#2b88d8]"><use href="#chev"/></svg></button>
                    <span class="h-7 w-px bg-[#ddd]"></span>
                    <button class="flex w-[42px] items-center justify-center gap-1.5 text-[13px]">Aa<svg class="size-2"><use href="#chev"/></svg></button>
                    <span class="h-7 w-px bg-[#ddd]"></span>
                    <button class="flex w-7 justify-center" aria-label="Effacer la mise en forme"><svg class="size-4" viewBox="0 0 16 16"><path d="M.5 13L5.500 1l4 9M2 9h6" fill="none" stroke="#444" stroke-width="1.200"/><path d="M11 7l4 3-4.500 5-4-3z" fill="#f3cdf5" stroke="#b146c2"/></svg></button>
                </div>
                <div class="mt-1 flex h-7 items-center text-[13px]">
                    <button class="w-6 font-bold">G</button>
                    <button class="w-[26px] font-['Liberation_Serif',serif] text-[15px] italic">I</button>
                    <button class="flex w-11 items-center justify-center gap-3"><u>S</u><svg class="size-2"><use href="#chev"/></svg></button>
                    <button class="w-6 text-[12px] line-through">ab</button>
                    <button class="w-[26px] font-semibold">x<sub class="text-[7px] text-[#2b88d8]">2</sub></button>
                    <button class="w-6 font-semibold">x<sup class="text-[7px] text-[#2b88d8]">2</sup></button>
                    <span class="h-7 w-px bg-[#ddd]"></span>
                    <button class="flex w-10 items-center justify-center gap-1.5 text-[16px] font-bold text-[#2b7cd3]">A<svg class="size-2 text-[#333]"><use href="#chev"/></svg></button>
                    <button class="flex w-11 items-center justify-center gap-1.5" aria-label="Surlignage"><svg class="size-4" viewBox="0 0 16 16"><path d="M5 8l6-8 3 2-6 8-4 .500z" fill="#eee" stroke="#555"/><path d="M0 12h16v4H0z" fill="#12e312"/></svg><svg class="size-2"><use href="#chev"/></svg></button>
                    <button class="flex w-10 items-center justify-center gap-1.5"><span class="w-4 border-b-4 border-black leading-3">A</span><svg class="size-2"><use href="#chev"/></svg></button>
                </div>
                <div class="mt-auto flex items-center text-[10px] leading-4"><span class="flex-1 text-center">Police</span><svg class="mr-0.5 size-2"><use href="#launcher"/></svg></div>
            </div>
            <div class="mb-0.5 mt-1.5 flex w-[248px] flex-col border-r border-[#d4d4d4] pl-2">
                <div class="mt-1 flex h-7 items-center">
                    <button class="flex w-10 items-center justify-center gap-1.5" aria-label="Puces"><svg class="size-4" viewBox="0 0 16 16"><path d="M0 1h3v3H0zM0 6.500h3v3H0zM0 12h3v3H0z" fill="#2b88d8"/><path d="M5 2.500h11M5 8h11M5 13.500h11" stroke="#555"/></svg><svg class="size-2"><use href="#chev"/></svg></button>
                    <button class="flex w-10 items-center justify-center gap-1.5" aria-label="Numérotation"><svg class="size-4" viewBox="0 0 16 16"><path d="M1 0h1v4M0 6h2v2H0v2h2M0 12h2v3.500H0M0 13.500h2" fill="none" stroke="#2b88d8"/><path d="M5 2.500h11M5 8h11M5 13.500h11" stroke="#555"/></svg><svg class="size-2"><use href="#chev"/></svg></button>
                    <button class="flex w-11 items-center justify-center gap-1.5" aria-label="Liste à plusieurs niveaux"><svg class="size-4" viewBox="0 0 16 16"><path d="M1 0h1v4M3 6.500h3V10H3V8h3M7 12h1v4" fill="none" stroke="#2b88d8"/><path d="M4 2.500h12M8 8h8M10 13.500h6" stroke="#555"/></svg><svg class="size-2"><use href="#chev"/></svg></button>
                    <span class="h-7 w-px bg-[#ddd]"></span>
                    <button class="flex w-7 justify-center" aria-label="Diminuer le retrait"><svg class="size-4" viewBox="0 0 16 16"><path d="M0 1.500h15M9 5.500h6M9 9.500h6M0 13.500h15" stroke="#555"/><path d="M7 7.500H1M3.500 5L1 7.500 3.500 10" fill="none" stroke="#2b88d8" stroke-width="1.300"/></svg></button>
                    <button class="flex w-6 justify-center" aria-label="Augmenter le retrait"><svg class="size-4" viewBox="0 0 16 16"><path d="M0 1.500h15M9 5.500h6M9 9.500h6M0 13.500h15" stroke="#555"/><path d="M0 7.500h6M3.500 5L6 7.500 3.500 10" fill="none" stroke="#2b88d8" stroke-width="1.300"/></svg></button>
                    <span class="h-7 w-px bg-[#ddd]"></span>
                    <button class="flex w-7 justify-center" aria-label="Trier"><svg class="h-4 w-[18px]" viewBox="0 0 18 16"><path d="M.5 6.500L3.500 0l3 6.500M1.500 4.500h4" fill="none" stroke="#2b88d8" stroke-width="1.300"/><path d="M1 9.500h5l-5 6h5M13 0v15M9.500 11.500L13 15l3.500-3.500" fill="none" stroke="#444" stroke-width="1.300"/></svg></button>
                    <span class="h-7 w-px bg-[#ddd]"></span>
                    <button class="w-7 text-[15px]">¶</button>
                </div>
                <div class="mt-1 flex h-7 items-center">
                    <button class="flex w-[26px] justify-center" aria-label="Aligner à gauche"><svg class="size-4" viewBox="0 0 16 16"><path d="M1 2h14M1 6h10M1 10h14M1 14h8" stroke="#555" stroke-width="1.200"/></svg></button>
                    <button class="flex h-6 w-6 items-center justify-center rounded-xs border border-[#999] bg-[#e4e4e4]" aria-label="Centrer"><svg class="size-4" viewBox="0 0 16 16"><path d="M1 2h14M3 6h10M1 10h14M4 14h8" stroke="#444" stroke-width="1.200"/></svg></button>
                    <button class="flex w-7 justify-center" aria-label="Aligner à droite"><svg class="size-4" viewBox="0 0 16 16"><path d="M1 2h14M5 6h10M1 10h14M7 14h8" stroke="#555" stroke-width="1.200"/></svg></button>
                    <button class="flex w-6 justify-center" aria-label="Justifier"><svg class="size-4" viewBox="0 0 16 16"><path d="M1 2h14M1 6h14M1 10h14M1 14h14" stroke="#555" stroke-width="1.200"/></svg></button>
                    <span class="h-7 w-px bg-[#ddd]"></span>
                    <button class="flex w-11 items-center justify-center gap-1.5" aria-label="Interligne"><svg class="size-4" viewBox="0 0 16 16"><path d="M7 2h9M7 6h9M7 10h9M7 14h9" stroke="#555" stroke-width="1.200"/><path d="M3 1v5M3 10v5M1 3l2-2 2 2M1 13l2 2 2-2" fill="none" stroke="#2b88d8" stroke-width="1.300"/></svg><svg class="size-2"><use href="#chev"/></svg></button>
                    <span class="h-7 w-px bg-[#ddd]"></span>
                    <button class="flex w-10 items-center justify-center gap-1.5" aria-label="Trame de fond"><svg class="size-4" viewBox="0 0 16 16"><path d="M8 1l6 5-5 6-7-4z" fill="none" stroke="#444" stroke-width="1.200"/><path d="M14 6q2 3 .5 5" fill="none" stroke="#2b7cd3" stroke-width="1.500"/><path d="M.5 13h15v2.500H.5z" fill="#fff" stroke="#555"/></svg><svg class="size-2"><use href="#chev"/></svg></button>
                    <button class="flex w-10 items-center justify-center gap-1.5" aria-label="Bordures"><svg class="size-4" viewBox="0 0 16 16"><path d="M.5.500h15v14H.5zM8 .500v14M.5 7.500h15" fill="none" stroke="#555" stroke-dasharray="1 1"/><path d="M0 15.500h16" stroke="#333"/></svg><svg class="size-2"><use href="#chev"/></svg></button>
                </div>
                <div class="mt-auto flex items-center text-[10px] leading-4"><span class="flex-1 text-center">Paragraphe</span><svg class="mr-0.5 size-2"><use href="#launcher"/></svg></div>
            </div>
            <div class="mb-0.5 mt-1.5 flex w-[578px] flex-col border-r border-[#d4d4d4] pl-2.5">
                <div class="mt-1.5 flex h-[60px]">
                    <div class="grid h-full w-[540px] grid-cols-5 border border-[#e4ebf2] text-[#111]">
                        <button class="border-[3px] border-[#c5d5f0]">Normal</button>
                        <button>Sans interligne</button>
                        <button class="text-[17px] text-[#5470b0]">Titre 1</button>
                        <button class="text-[14px] text-[#5470b0]">Titre 2</button>
                        <button class="text-[13px] text-[#44587e]">Titre 3</button>
                    </div>
                    <div class="grid w-4 grid-rows-3 divide-y divide-[#ddd] border border-[#ddd]">
                        <button class="flex items-center justify-center text-[#bbb]" aria-label="Haut"><svg class="size-2 -scale-y-100"><use href="#chev"/></svg></button>
                        <button class="flex items-center justify-center" aria-label="Bas"><svg class="size-2"><use href="#chev"/></svg></button>
                        <button class="flex items-center justify-center" aria-label="Autres"><svg class="size-2" viewBox="0 0 8 8"><path d="M1 1h6M1 3.500l3 3 3-3" fill="none" stroke="#333" stroke-width="1.200"/></svg></button>
                    </div>
                </div>
                <div class="mt-auto flex items-center text-[10px] leading-4"><span class="flex-1 text-center">Styles</span><svg class="mr-0.5 size-2"><use href="#launcher"/></svg></div>
            </div>
            <div class="mb-0.5 mt-1.5 flex w-[125px] flex-col border-r border-[#d4d4d4] pl-3">
                <button class="flex h-[22px] items-center gap-1"><svg class="size-4 -scale-x-100"><use href="#find"/></svg>Rechercher <svg class="ml-2 size-2"><use href="#chev"/></svg></button>
                <button class="mt-1 flex h-[22px] items-center gap-1"><svg class="size-4" viewBox="0 0 16 16"><path d="M6 0v7h4V3H6" fill="none" stroke="#b146c2" stroke-width="1.300"/><path d="M15 10h-4v5h4M2 4Q-1 9 4 12h4M5.500 9.500L8 12l-2.500 2.500" fill="none" stroke="#2b88d8" stroke-width="1.300"/></svg>Remplacer</button>
                <button class="mt-1 flex h-[22px] items-center gap-1"><svg class="size-4" viewBox="0 0 16 16"><path d="M3 1l9 9H8l2.500 4.500-2 1L6 11l-3 3z" fill="#fff" stroke="#444" stroke-width="1.200"/></svg>Sélectionner<svg class="size-2"><use href="#chev"/></svg></button>
                <span class="mt-auto pr-3 text-center text-[10px] leading-4">Édition</span>
            </div>
            <div class="mb-0.5 mt-1.5 flex w-[58px] flex-col items-center border-r border-[#d4d4d4]">
                <svg class="mt-0.5 h-[30px] w-5 shrink-0" viewBox="0 0 20 30"><rect x="4" y="0" width="12" height="19" rx="6" fill="#83beec" stroke="#2b88d8" stroke-width="1.300"/><path d="M1 13q0 10 9 10t9-10M10 23v7" fill="none" stroke="#555" stroke-width="1.300"/></svg>
                <span class="mt-1 leading-4">Dicter</span>
                <span class="mt-auto text-[10px] leading-4">Voix</span>
            </div>
            <div class="mb-0.5 mt-1.5 flex w-[107px] flex-col items-center border-r border-[#d4d4d4]">
                <svg class="mt-0.5 h-[30px] w-7 shrink-0" viewBox="0 0 28 30"><path d="M1 2h16v8l5 8v11H1z" fill="#eee" stroke="#bbb" stroke-width="1.500"/><path d="M7 19l7-9 5 4-7 9z" fill="#ddd" stroke="#bbb"/><path d="M14 6l7-5 6 6-6 7-6-3z" fill="#ddd" stroke="#b5b5b5"/><path d="M17 6l7 3M20 3l5 4" stroke="#b5b5b5"/></svg>
                <span class="mt-1 text-center leading-4 text-[#bbb]">Niveau de<br>confidentialité <svg class="inline size-2"><use href="#chev"/></svg></span>
                <span class="mt-auto text-[10px] leading-4">Confidentialité</span>
            </div>
            <div class="mb-0.5 mt-1.5 flex w-[73px] flex-col items-center border-r border-[#d4d4d4]">
                <svg class="mt-0.5 h-[30px] w-[30px] shrink-0" viewBox="0 0 30 30"><path d="M16 9h14v4H14zM14 16h12v4H12zM9 23h12v4H5z" fill="#185abd"/><path d="M17 0l6 4L8 24l-7 6 1-9z" fill="#fff" stroke="#185abd" stroke-width="1.500"/><path d="M17 0l6 4-2.500 4-6-4z" fill="#185abd"/></svg>
                <span class="mt-1 leading-4">Rédacteur</span>
                <span class="mt-auto text-[10px] leading-4">Rédacteur</span>
            </div>
            <div class="mb-0.5 mt-1.5 flex w-[105px] flex-col items-center border-r border-[#d4d4d4]">
                <svg class="mt-0.5 h-[30px] w-[30px] shrink-0" viewBox="0 0 30 30"><path d="M1 25V4h26" fill="none" stroke="#444" stroke-width="1.500"/><path d="M5 8h22v18H5z" fill="#fff" stroke="#444" stroke-width="1.500"/><path d="M9 12h15v11H9z" fill="#fff" stroke="#e0a98f" stroke-width="1.500"/><circle cx="19" cy="19" r="6.500" fill="#eaf5fd" stroke="#2b88d8" stroke-width="1.300"/><path d="M24 24l5 6" stroke="#2b88d8" stroke-width="1.500"/></svg>
                <span class="mt-1 text-center leading-4">Réutiliser<br>des fichiers</span>
                <span class="mt-auto whitespace-nowrap text-[10px] leading-4">Réutiliser des fichiers</span>
            </div>
            <button class="ml-auto mr-2.5 mt-auto pb-1.5" aria-label="Réduire le ruban"><svg class="size-3"><use href="#chev"/></svg></button>
        </div>
        <div class="flex h-[34px] items-center pl-2 text-[11px]">
            <button class="flex items-center gap-1"><svg class="size-4"><use href="#floppy"/></svg>Enregistrer</button>
            <button class="ml-[18px] flex items-center gap-1"><svg class="size-4" viewBox="0 0 16 16"><path d="M2.500.500h6l5 5v10h-11zM8.500.500v5h5" fill="#fff" stroke="#555" stroke-width="1.200"/></svg>Nouveau document</button>
            <button class="ml-[18px] flex items-center gap-1"><svg class="size-4" viewBox="0 0 16 16"><path d="M5 3h10.500v10.500H.5V8M6 10l9-7M11 3h4v4" fill="none" stroke="#444" stroke-width="1.200"/><path d="M1 1v5a1.500 1.500 0 003 0V1M2.500 1v4" fill="none" stroke="#444"/></svg>Envoyer par courrier</button>
            <button class="ml-5" aria-label="Personnaliser"><svg class="size-2" viewBox="0 0 8 8"><path d="M1 1h6M1 3.500l3 3 3-3" fill="none" stroke="#333" stroke-width="1.200"/></svg></button>
        </div>
    </div>

    <main class="min-h-0 flex-1 overflow-hidden pr-4 font-['Lato',sans-serif] text-[16px] leading-[23px] text-black">
        <article class="mx-auto h-[575px] w-[952px] border-x border-b border-[#c6c6c6] bg-white px-28 pt-2.5">
            <p>Sources : <a href="#" class="text-[#1763b8] underline"><span class="underline decoration-red-500 decoration-wavy decoration-1">Worl</span> Population Prospectives 2022 (ONU)</a></p>
            <p class="mt-12.5 text-justify"><mark class="bg-[#ffff00]">Non seulement le nombres de personnes âgées augmentent mais également la part qu’ils représentent dans la population</mark>. Les prévisions démontrent que les personnes âgées seront deux fois plus nombreuses que le nombre d’enfants de moins de 5 ans en 2050. Ceci est dû à une moindre mortalité parmi les personnes âgées mais surtout une baisse du nombre d’enfants par femme.</p>
            <h3 class="mt-[86px] flex pl-[29px] text-[19px] font-light text-[#2f5496]"><span class="w-14">3.</span>Situation de la Belgique</h3>
            <hr class="mt-[148px] w-[230px] border-t-2 border-[#8a8a8a]">
            <p class="mt-2 text-[15px]"><sup class="text-[9px]">5</sup> <span class="underline decoration-[#7aa3e0] decoration-double">ibidem</span></p>
        </article>
        <article class="mx-auto mt-[18px] h-full w-[952px] border border-[#c6c6c6] bg-white"></article>
    </main>

    <div class="flex h-[21px] shrink-0 items-center bg-[#f5f5f5] pl-[7px] pr-1.5 text-[10px] text-[#333]">
        <span>Page 4 sur 5</span>
        <span class="ml-5">1405 mots</span>
        <svg class="ml-10 size-3.5" viewBox="0 0 14 14"><path d="M1 1h5v12H1zM6 1h6v6M8 8l4 5M12 8l-4 5" fill="none" stroke="#444"/></svg>
        <span class="ml-4">Français (Belgique)</span>
        <svg class="ml-[18px] size-3.5" viewBox="0 0 14 14"><circle cx="6" cy="2" r="1.500" fill="none" stroke="#333"/><path d="M1 4l4 1.500h2L11 4M5 5.500V9l-2 4.500M7 5.500V8M8 9l5 4.500M13 9l-5 4.500" fill="none" stroke="#333"/></svg>
        <span class="ml-1">Accessibilité : consultez nos recommandations</span>
        <svg class="ml-auto size-3.5" viewBox="0 0 14 14"><path d="M7 10.500H.5v-9h13V7" fill="none" stroke="#333"/><circle cx="10" cy="10" r="2.500" fill="none" stroke="#333" stroke-width="1.500"/></svg>
        <span class="ml-0.5">Paramètres d'affichage</span>
        <svg class="ml-4 size-3.5" viewBox="0 0 14 14"><path d="M3 .5H.5V3M11 .5h2.500V3M3 13.500H.5V11M11 13.500h2.500V11M4.500 3h3l2 2v6h-5z" fill="none" stroke="#333"/></svg>
        <span class="ml-1">Focus</span>
        <svg class="ml-6 size-3.5" viewBox="0 0 14 14"><path d="M.5 1.500h6v11h-6zM7.500 1.500h6v11h-6zM2 4.500h3M2 7h3M2 9.500h3M9 4.500h3M9 7h3M9 9.500h3" fill="none" stroke="#333"/></svg>
        <span class="ml-3.5 flex h-full w-10 items-center justify-center bg-[#dcdcdc]"><svg class="size-3.5" viewBox="0 0 14 14"><path d="M1.500.500h11v13h-11zM3.500 3.500h7M3.500 6h7M3.500 8.500h7M3.500 11h7" fill="none" stroke="#333"/></svg></span>
        <svg class="ml-3 size-3.5" viewBox="0 0 14 14"><path d="M6 12.500H.5V1h12v5M3 4h7M3 6.500h4M3 9h3" fill="none" stroke="#333"/><circle cx="10" cy="10" r="3" fill="none" stroke="#333"/></svg>
        <button class="ml-4 text-[12px]">−</button>
        <span class="relative ml-1.5 h-px w-[100px] bg-[#777]"><i class="absolute -top-1.5 left-[51px] h-3 w-1 bg-[#555]"></i></span>
        <button class="ml-1 text-[12px]">+</button>
        <span class="ml-3">120%</span>
    </div>

    <footer class="grid h-12 shrink-0 grid-cols-[607px_1fr_auto] items-center border-t border-[#cdd3d8] bg-[linear-gradient(90deg,#d0dfe8_0%,#d0dfe9_28%,#dcdcde_32%,#dfdcde_48%,#d8dde4_55%,#f5d3d6_58%,#f5d3d6_63%,#d9dbe3_69%,#d6dce6_100%)] text-[11px] leading-4">
        <div class="flex items-center gap-1.5 pl-[17px]">
            <svg class="h-5 w-[26px]"><use href="#t-cloud"/></svg>
            <div>23°C<br><span class="text-[#555]">Nuageux</span></div>
        </div>
        <ul class="flex items-center">
            <li class="flex h-[38px] w-11 items-center justify-center"><svg class="size-6"><use href="#t-start"/></svg></li>
            <li class="flex h-[38px] w-11 items-center justify-center"><svg class="size-6"><use href="#t-find"/></svg></li>
            <li class="flex h-[38px] w-11 items-center justify-center"><svg class="size-6"><use href="#t-desk"/></svg></li>
            <li class="flex h-[38px] w-11 items-center justify-center"><svg class="size-6"><use href="#t-chat"/></svg></li>
            <li class="relative flex h-[38px] w-11 items-center justify-center"><svg class="size-6"><use href="#t-folder"/></svg><i class="absolute bottom-0 h-[3px] w-1.5 rounded-full bg-[#777]"></i></li>
            <li class="flex h-[38px] w-11 items-center justify-center"><svg class="size-6"><use href="#t-chrome"/></svg></li>
            <li class="relative flex h-[38px] w-11 items-center justify-center"><svg class="size-6"><use href="#t-outlook"/></svg><svg class="absolute right-1 top-0.5 size-4"><use href="#t-mail"/></svg><i class="absolute bottom-0 h-[3px] w-1.5 rounded-full bg-[#777]"></i></li>
            <li class="relative flex h-[38px] w-11 items-center justify-center"><svg class="size-6"><use href="#t-word"/></svg><i class="absolute bottom-0 h-[3px] w-1.5 rounded-full bg-[#777]"></i></li>
            <li class="flex h-[38px] w-11 items-center justify-center"><svg class="size-6"><use href="#t-ppt"/></svg></li>
            <li class="flex h-[38px] w-11 items-center justify-center"><svg class="size-6"><use href="#t-excel"/></svg></li>
            <li class="flex h-[38px] w-11 items-center justify-center"><svg class="size-6"><use href="#t-teams"/></svg></li>
            <li class="flex h-[38px] w-11 items-center justify-center"><svg class="size-6"><use href="#t-zoom"/></svg></li>
            <li class="flex h-[38px] w-11 items-center justify-center"><svg class="size-6"><use href="#t-onenote"/></svg></li>
            <li class="relative mx-[3px] flex h-[38px] w-[38px] items-center justify-center rounded bg-white/60"><svg class="size-6"><use href="#t-edge"/></svg><i class="absolute bottom-0 h-[3px] w-4 rounded-full bg-[#0f6cbd]"></i></li>
            <li class="relative flex h-[38px] w-11 items-center justify-center"><svg class="size-6"><use href="#t-wa"/></svg><i class="absolute bottom-0 h-[3px] w-1.5 rounded-full bg-[#777]"></i></li>
            <li class="relative flex h-[38px] w-11 items-center justify-center"><svg class="size-6"><use href="#t-chrome"/></svg><svg class="absolute right-1 top-0.5 size-4"><use href="#t-face"/></svg><i class="absolute bottom-0 h-[3px] w-1.5 rounded-full bg-[#777]"></i></li>
        </ul>
        <div class="pr-4 text-right text-[#444]">16:01<br>28-07-22</div>
    </footer>
</section>
</body>
</html>
